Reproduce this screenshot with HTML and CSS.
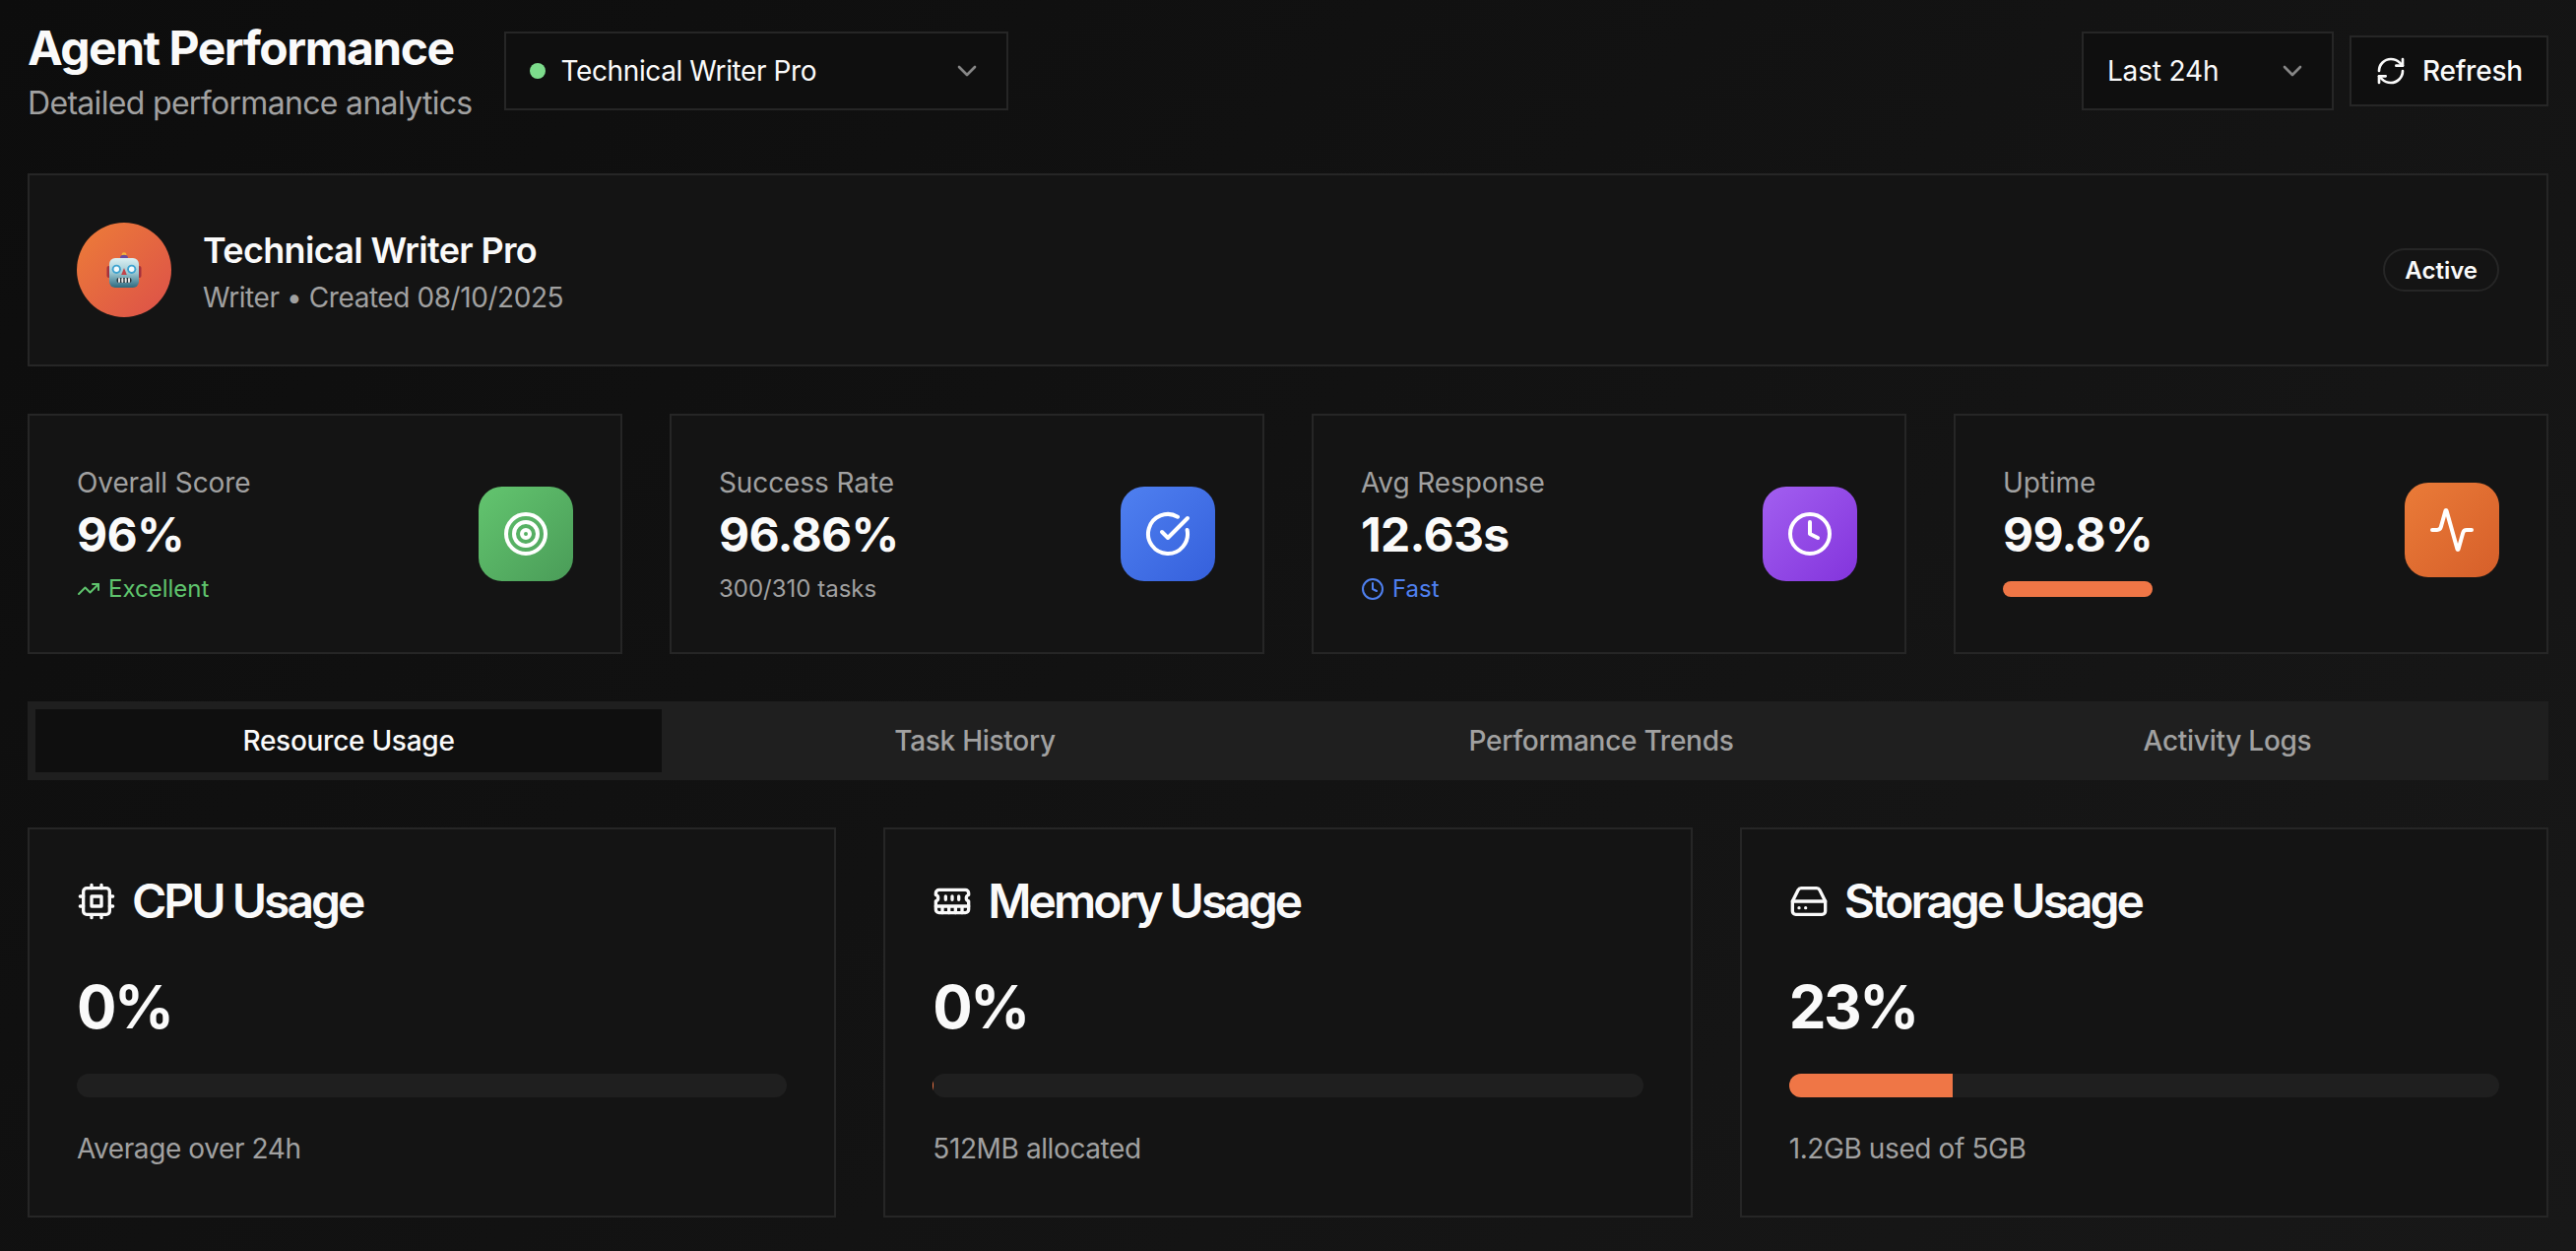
FILE: index.html
```html
<!DOCTYPE html>
<html lang="en">
<head>
  <meta charset="UTF-8">
  <meta name="viewport" content="width=device-width, initial-scale=1">
  <title>Agent Performance</title>
  <link rel="stylesheet" href="styles.css">
</head>
<body>

<div class="page">

  <!-- Header -->
  <header class="top-bar">
    <div class="top-left">
      <div class="page-title">
        <h1>Agent Performance</h1>
        <p>Detailed performance analytics</p>
      </div>
      <button class="select agent-select">
        <span class="select-value"><span class="dot"></span>Technical Writer Pro</span>
        <svg class="icon-32 chevron" viewBox="0 0 24 24"><path d="m6 9 6 6 6-6"/></svg>
      </button>
    </div>
    <div class="top-right">
      <button class="select range-select">
        <span class="select-value">Last 24h</span>
        <svg class="icon-32 chevron" viewBox="0 0 24 24"><path d="m6 9 6 6 6-6"/></svg>
      </button>
      <button class="refresh-btn">
        <svg class="icon-32" viewBox="0 0 24 24"><path d="M3 12a9 9 0 0 1 9-9 9.75 9.75 0 0 1 6.74 2.74L21 8"/><path d="M21 3v5h-5"/><path d="M21 12a9 9 0 0 1-9 9 9.75 9.75 0 0 1-6.74-2.74L3 16"/><path d="M8 16H3v5"/></svg>
        Refresh
      </button>
    </div>
  </header>

  <!-- Agent info -->
  <section class="card profile">
    <div class="profile-main">
      <div class="avatar">
        <svg class="robot" viewBox="0 0 36 36">
          <defs>
            <linearGradient id="robotHead" x1="0" y1="0" x2="0" y2="1">
              <stop offset="0" stop-color="#dcf0f3"/>
              <stop offset="0.5" stop-color="#9cc8d2"/>
              <stop offset="1" stop-color="#2c6a80"/>
            </linearGradient>
          </defs>
          <rect x="0.5" y="14" width="4" height="12" rx="2" fill="#a5313c"/>
          <rect x="31.5" y="14" width="4" height="12" rx="2" fill="#a5313c"/>
          <circle cx="18" cy="2.6" r="2.4" fill="#f5b53a"/>
          <path d="M14 6a4 3.2 0 0 1 8 0z" fill="#6b4a9c"/>
          <rect x="3" y="6" width="30" height="30" rx="6" fill="url(#robotHead)"/>
          <circle cx="10.3" cy="17.3" r="4.6" fill="#3fa3d0"/>
          <circle cx="10.3" cy="17.3" r="2.7" fill="#f4fbfd"/>
          <circle cx="25.7" cy="17.3" r="4.6" fill="#3fa3d0"/>
          <circle cx="25.7" cy="17.3" r="2.7" fill="#f4fbfd"/>
          <path d="M18 16 15.2 23h5.6z" fill="#c2434a"/>
          <rect x="10.5" y="26" width="15" height="5" rx="2" fill="#26363d"/>
          <path d="M13 27v3M16.3 27v3M19.7 27v3M23 27v3" stroke="#e6e6e6" stroke-width="2"/>
        </svg>
      </div>
      <div>
        <div class="agent-name">Technical Writer Pro</div>
        <div class="agent-meta">Writer • Created 08/10/2025</div>
      </div>
    </div>
    <span class="badge">Active</span>
  </section>

  <!-- Stats -->
  <section class="stat-grid">
    <div class="card stat">
      <div class="stat-row">
        <div>
          <div class="stat-label">Overall Score</div>
          <div class="stat-value">96%</div>
          <div class="stat-note green">
            <svg class="icon-24" viewBox="0 0 24 24"><path d="M16 7h6v6"/><path d="m22 7-8.5 8.5-5-5L2 17"/></svg>
            Excellent
          </div>
        </div>
        <div class="stat-icon bg-green">
          <svg class="icon-48" viewBox="0 0 24 24"><circle cx="12" cy="12" r="10"/><circle cx="12" cy="12" r="6"/><circle cx="12" cy="12" r="2"/></svg>
        </div>
      </div>
    </div>

    <div class="card stat">
      <div class="stat-row">
        <div>
          <div class="stat-label">Success Rate</div>
          <div class="stat-value">96.86%</div>
          <div class="stat-note">300/310 tasks</div>
        </div>
        <div class="stat-icon bg-blue">
          <svg class="icon-48" viewBox="0 0 24 24"><path d="M21.801 10A10 10 0 1 1 17 3.335"/><path d="m9 11 3 3L22 4"/></svg>
        </div>
      </div>
    </div>

    <div class="card stat">
      <div class="stat-row">
        <div>
          <div class="stat-label">Avg Response</div>
          <div class="stat-value">12.63s</div>
          <div class="stat-note blue">
            <svg class="icon-24" viewBox="0 0 24 24"><circle cx="12" cy="12" r="10"/><polyline points="12 6 12 12 16 14"/></svg>
            Fast
          </div>
        </div>
        <div class="stat-icon bg-purple">
          <svg class="icon-48" viewBox="0 0 24 24"><circle cx="12" cy="12" r="10"/><polyline points="12 6 12 12 16 14"/></svg>
        </div>
      </div>
    </div>

    <div class="card stat">
      <div class="stat-row">
        <div>
          <div class="stat-label">Uptime</div>
          <div class="stat-value">99.8%</div>
          <div class="uptime-bar"></div>
        </div>
        <div class="stat-icon bg-orange">
          <svg class="icon-48" viewBox="0 0 24 24"><path d="M22 12h-2.48a2 2 0 0 0-1.93 1.46l-2.35 8.36a.25.25 0 0 1-.48 0L9.24 2.18a.25.25 0 0 0-.48 0l-2.35 8.36A2 2 0 0 1 4.49 12H2"/></svg>
        </div>
      </div>
    </div>
  </section>

  <!-- Tabs -->
  <nav class="tabs">
    <button class="tab active">Resource Usage</button>
    <button class="tab">Task History</button>
    <button class="tab">Performance Trends</button>
    <button class="tab">Activity Logs</button>
  </nav>

  <!-- Resource usage -->
  <section class="resource-grid">
    <div class="card resource">
      <h3 class="resource-title">
        <svg class="icon-40" viewBox="0 0 24 24"><rect x="4" y="4" width="16" height="16" rx="2"/><rect x="9" y="9" width="6" height="6"/><path d="M15 2v2M15 20v2M2 15h2M2 9h2M20 15h2M20 9h2M9 2v2M9 20v2"/></svg>
        CPU Usage
      </h3>
      <div class="resource-value">0%</div>
      <div class="progress"><div class="progress-fill" style="width: 0%"></div></div>
      <div class="resource-note">Average over 24h</div>
    </div>

    <div class="card resource">
      <h3 class="resource-title">
        <svg class="icon-40" viewBox="0 0 24 24"><path d="M6 19v-3M10 19v-3M14 19v-3M18 19v-3M8 11V9M16 11V9M12 11V9M2 15h20"/><path d="M2 7a2 2 0 0 1 2-2h16a2 2 0 0 1 2 2v1.1a2 2 0 0 0 0 3.837V17a2 2 0 0 1-2 2H4a2 2 0 0 1-2-2v-5.1a2 2 0 0 0 0-3.837Z"/></svg>
        Memory Usage
      </h3>
      <div class="resource-value">0%</div>
      <div class="progress"><div class="progress-fill" style="width: 0.15%"></div></div>
      <div class="resource-note">512MB allocated</div>
    </div>

    <div class="card resource">
      <h3 class="resource-title">
        <svg class="icon-40" viewBox="0 0 24 24"><path d="M22 12H2"/><path d="M5.45 5.11 2 12v6a2 2 0 0 0 2 2h16a2 2 0 0 0 2-2v-6l-3.45-6.89A2 2 0 0 0 16.76 4H7.24a2 2 0 0 0-1.79 1.11z"/><path d="M6 16h.01M10 16h.01"/></svg>
        Storage Usage
      </h3>
      <div class="resource-value">23%</div>
      <div class="progress"><div class="progress-fill" style="width: 23%"></div></div>
      <div class="resource-note">1.2GB used of 5GB</div>
    </div>
  </section>

</div>

</body>
</html>
```

FILE: styles.css
```css
* {
  box-sizing: border-box;
}
html, body {
  margin: 0;
  height: 100%;
}
body {
  font-family: Inter, "Noto Sans", sans-serif;
  background: linear-gradient(135deg, #0d0d0d, #181818);
  color: #fafafa;
  overflow: hidden;
}
button {
  font-family: inherit;
  color: inherit;
  cursor: pointer;
}
svg {
  fill: none;
  stroke: currentColor;
  stroke-width: 2;
  stroke-linecap: round;
  stroke-linejoin: round;
  flex-shrink: 0;
}
.icon-24 { width: 24px; height: 24px; }
.icon-32 { width: 32px; height: 32px; }
.icon-40 { width: 40px; height: 40px; }
.icon-48 { width: 48px; height: 48px; }

.page {
  padding: 16px 28px 34px;
  display: flex;
  flex-direction: column;
  gap: 48px;
}

/* header */
.top-bar {
  display: flex;
  justify-content: space-between;
  align-items: center;
}
.top-left, .top-right {
  display: flex;
  align-items: center;
}
.top-left {
  gap: 32px;
}
.top-right {
  gap: 16px;
}
.page-title h1 {
  margin: 0;
  padding-top: 1px;
  font-size: 48px;
  line-height: 63px;
  font-weight: 700;
  letter-spacing: -1.5px;
}
.page-title p {
  margin: 0;
  padding-top: 1px;
  font-size: 32px;
  line-height: 47px;
  letter-spacing: -0.68px;
  color: #a1a1a1;
}
.select {
  height: 80px;
  padding: 0 24px;
  display: flex;
  align-items: center;
  justify-content: space-between;
  background: #0f0f0f;
  border: 2px solid #262626;
  font-size: 28px;
}
.agent-select {
  width: 512px;
  letter-spacing: -0.4px;
}
.range-select {
  width: 256px;
  letter-spacing: -0.15px;
}
.select-value {
  display: flex;
  align-items: center;
  gap: 16px;
}
.chevron {
  opacity: 0.5;
}
.dot {
  width: 16px;
  height: 16px;
  border-radius: 50%;
  background: #7ddc8c;
}
.refresh-btn {
  height: 72px;
  padding: 0 24px;
  display: flex;
  align-items: center;
  gap: 16px;
  background: #0f0f0f;
  border: 2px solid #262626;
  font-size: 28px;
  font-weight: 500;
  letter-spacing: -0.2px;
}

/* cards */
.card {
  background: #141414;
  border: 2px solid #262626;
  padding: 48px;
}
.profile {
  display: flex;
  justify-content: space-between;
  align-items: center;
}
.profile-main {
  display: flex;
  align-items: center;
  gap: 32px;
}
.avatar {
  width: 96px;
  height: 96px;
  border-radius: 50%;
  background: linear-gradient(135deg, #ed7d38, #dc5049);
  display: flex;
  align-items: center;
  justify-content: center;
}
.robot {
  width: 36px;
  height: 36px;
  stroke: none;
}
.agent-name {
  font-size: 36px;
  line-height: 56px;
  font-weight: 600;
  letter-spacing: -0.67px;
}
.agent-meta {
  font-size: 28px;
  line-height: 40px;
  letter-spacing: -0.43px;
  color: #a1a1a1;
}
.badge {
  padding: 0 20px;
  height: 44px;
  display: flex;
  align-items: center;
  border: 2px solid #262626;
  border-radius: 22px;
  font-size: 24px;
  font-weight: 600;
}

/* stats */
.stat-grid {
  display: grid;
  grid-template-columns: repeat(4, 1fr);
  gap: 48px;
}
.stat-row {
  display: flex;
  justify-content: space-between;
  align-items: center;
}
.stat-label {
  font-size: 28px;
  line-height: 40px;
  letter-spacing: -0.1px;
  color: #a1a1a1;
}
.stat-value {
  padding-top: 1px;
  font-size: 48px;
  line-height: 63px;
  font-weight: 700;
  letter-spacing: -0.7px;
}
.stat-note {
  margin-top: 8px;
  display: flex;
  align-items: center;
  gap: 8px;
  font-size: 24px;
  line-height: 32px;
  color: #a1a1a1;
}
.stat-note.green { color: #5fc46d; }
.stat-note.blue { color: #4f80f0; }
.uptime-bar {
  margin-top: 16px;
  height: 16px;
  border-radius: 8px;
  background: #ef7646;
}
.stat-icon {
  width: 96px;
  height: 96px;
  border-radius: 24px;
  display: flex;
  align-items: center;
  justify-content: center;
  color: #fff;
}
.bg-green { background: linear-gradient(135deg, #63c56f, #4a9c58); }
.bg-blue { background: linear-gradient(135deg, #4f80f0, #3560dc); }
.bg-purple { background: linear-gradient(135deg, #a25ff0, #8334dc); }
.bg-orange { background: linear-gradient(135deg, #ea7b38, #d65f2a); }

/* tabs */
.tabs {
  display: grid;
  grid-template-columns: repeat(4, 1fr);
  height: 80px;
  padding: 8px;
  background: #1f1f1f;
}
.tab {
  border: none;
  background: transparent;
  font-size: 28px;
  font-weight: 500;
  letter-spacing: -0.27px;
  color: #a1a1a1;
}
.tab.active {
  background: #0f0f0f;
  color: #fafafa;
}

/* resources */
.resource-grid {
  display: grid;
  grid-template-columns: repeat(3, 1fr);
  gap: 48px;
}
.resource-title {
  margin: 0 0 47px;
  padding-top: 1px;
  display: flex;
  align-items: center;
  gap: 16px;
  font-size: 48px;
  line-height: 48px;
  font-weight: 600;
  letter-spacing: -3px;
}
.resource-value {
  padding-top: 1px;
  font-size: 60px;
  line-height: 71px;
  font-weight: 700;
  letter-spacing: -2.5px;
}
.progress {
  margin: 32px 0;
  height: 24px;
  border-radius: 12px;
  background: #1f1f1f;
  overflow: hidden;
}
.progress-fill {
  height: 100%;
  background: #ef7646;
}
.resource-note {
  font-size: 28px;
  line-height: 40px;
  letter-spacing: -0.4px;
  color: #a1a1a1;
}
```
